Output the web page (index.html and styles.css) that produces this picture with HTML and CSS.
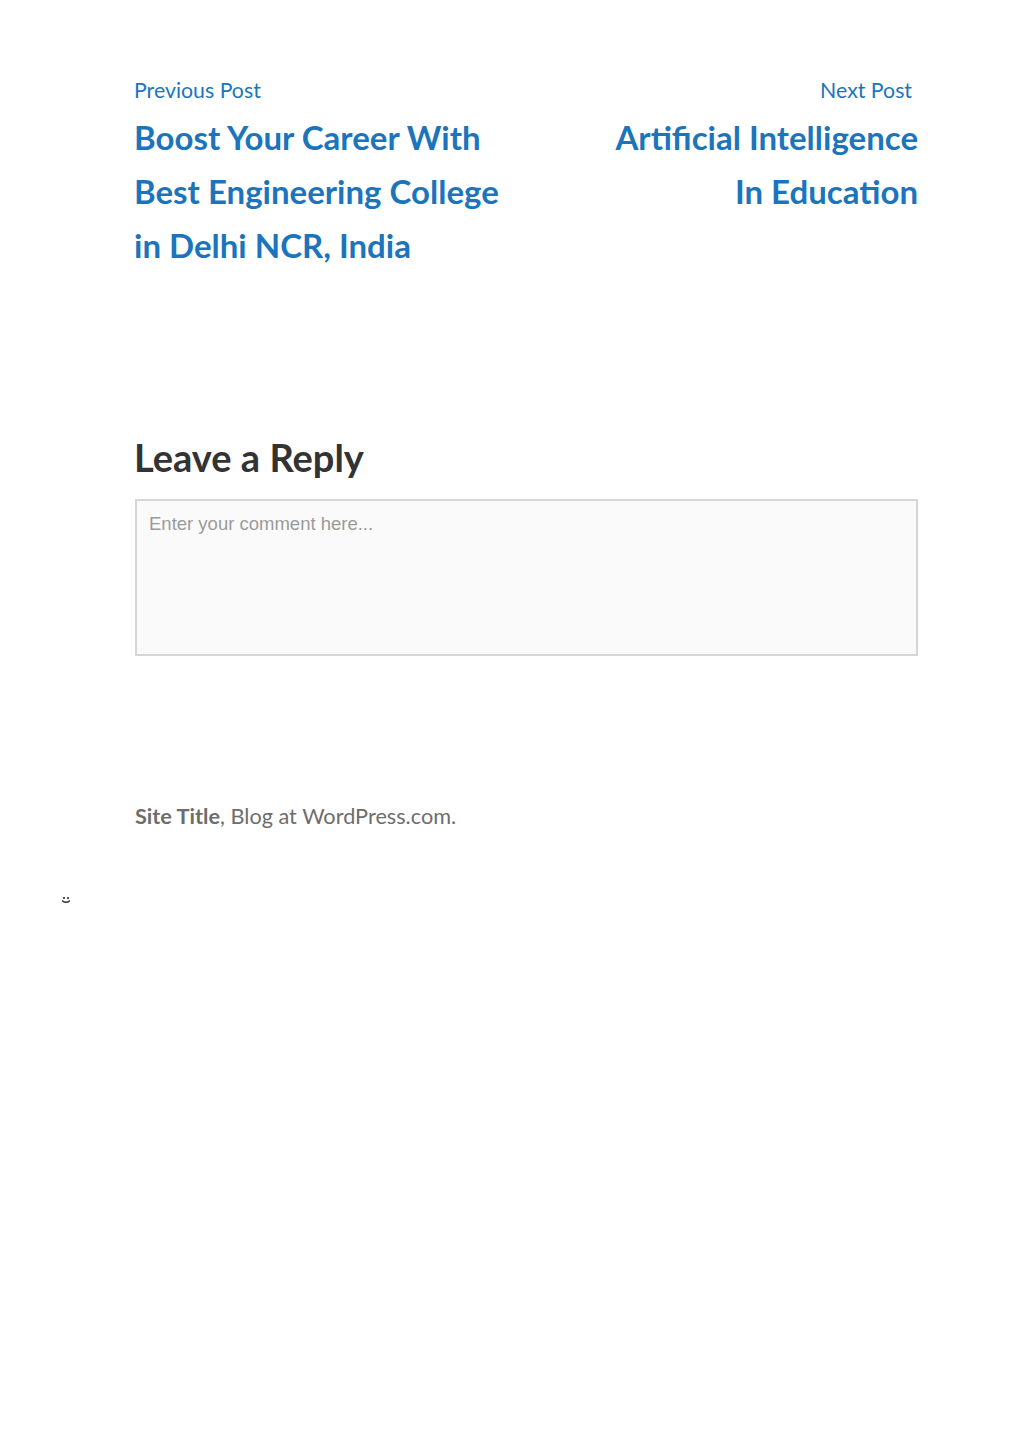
FILE: index.html
```html
<!DOCTYPE html>
<html lang="en">
<head>
<meta charset="utf-8">
<title>Post navigation</title>
<link rel="stylesheet" href="styles.css">
</head>
<body>
<main class="page">
  <nav class="post-nav">
    <div class="nav-prev">
      <a class="nav-label" href="#">Previous Post</a>
      <a class="nav-title" href="#">Boost Your Career With<br>Best Engineering College<br>in Delhi NCR, India</a>
    </div>
    <div class="nav-next">
      <a class="nav-label next-label" href="#">Next Post</a>
      <a class="nav-title" href="#">Artificial Intelligence<br>In Education</a>
    </div>
  </nav>

  <section class="reply">
    <h3 class="reply-title">Leave a Reply</h3>
    <div class="comment-box">Enter your comment here...</div>
  </section>

  <footer class="site-footer">
    <a class="site-title" href="#">Site Title</a>, Blog at WordPress.com.
  </footer>
</main>
<div class="smiley"><svg width="8" height="7" viewBox="0 0 8 7"><rect x="1" y="0" width="2" height="2" fill="#555"/><rect x="5" y="0" width="2" height="2" fill="#555"/><path d="M0 3.5 Q4 7 8 3.5" stroke="#333" stroke-width="1.4" fill="none"/></svg></div>
</body>
</html>
```
FILE: styles.css
```css
* { box-sizing: border-box; }
html, body { margin: 0; padding: 0; background: #fff; }
body {
  font-family: "Lato", "Open Sans", sans-serif;
  color: #333;
}
a { text-decoration: none; color: #1c75bc; }
.page {
  width: 783px;
  margin: 0 0 0 135px;
  padding-top: 76px;
}
.post-nav {
  display: flex;
  justify-content: space-between;
}
.nav-prev, .nav-next { display: flex; flex-direction: column; }
.nav-prev { margin-left: -1px; }
.nav-next { align-items: flex-end; text-align: right; }
.nav-label {
  font-size: 21.3px;
  line-height: 28px;
  color: #1c75bc;
}
.next-label { margin-right: 6px; }
.nav-title {
  font-size: 33px;
  font-weight: 700;
  line-height: 54px;
  color: #1c75bc;
  margin-top: 6px;
}
.reply { margin-top: 161px; }
.reply-title {
  font-size: 38px;
  font-weight: 700;
  line-height: 48px;
  margin: 0 0 18px -1px;
  color: #333;
}
.comment-box {
  height: 157px;
  border: 2px solid #d6d6d6;
  background: #fafafa;
  padding: 12px 12px;
  font-family: "Liberation Sans", Arial, sans-serif;
  font-size: 18.5px;
  color: #9a9a9a;
}
.site-footer {
  margin-top: 146px;
  font-size: 21.7px;
  line-height: 28px;
  color: #6d6d6d;
}
.site-title { font-weight: 700; color: #6d6d6d; }
.smiley { margin: 67px 0 0 62px; line-height: 0; }
```
